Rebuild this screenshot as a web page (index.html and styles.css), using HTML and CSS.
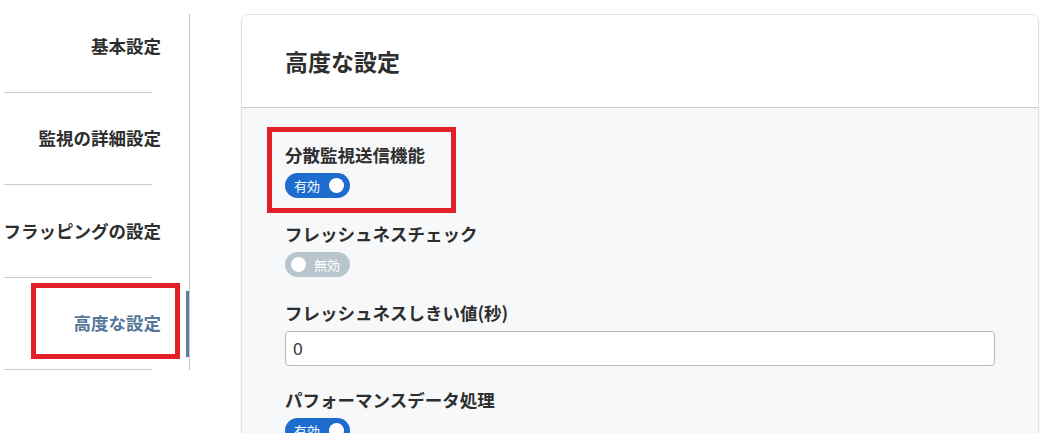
FILE: index.html
```html
<!DOCTYPE html>
<html lang="ja">
<head>
<meta charset="utf-8">
<title>高度な設定</title>
<link rel="stylesheet" href="styles.css">
</head>
<body>
<div class="page">
  <nav class="side">
    <ul class="side-list">
      <li class="side-item"><span class="side-text">基本設定</span></li>
      <li class="side-item"><span class="side-text">監視の詳細設定</span></li>
      <li class="side-item"><span class="side-text">フラッピングの設定</span></li>
      <li class="side-item active"><span class="side-text">高度な設定</span></li>
    </ul>
  </nav>
  <main class="card">
    <header class="card-head">
      <h1 class="card-title">高度な設定</h1>
    </header>
    <section class="card-body">
      <div class="field">
        <div class="label">分散監視送信機能</div>
        <span class="toggle on"><span class="toggle-text">有効</span><span class="knob"></span></span>
      </div>
      <div class="field">
        <div class="label">フレッシュネスチェック</div>
        <span class="toggle off"><span class="knob"></span><span class="toggle-text">無効</span></span>
      </div>
      <div class="field field-input">
        <div class="label">フレッシュネスしきい値(秒)</div>
        <input class="input" type="text" value="0">
      </div>
      <div class="field">
        <div class="label">パフォーマンスデータ処理</div>
        <span class="toggle on"><span class="toggle-text">有効</span><span class="knob"></span></span>
      </div>
    </section>
  </main>
  <div class="mark mark-nav"></div>
  <div class="mark mark-field"></div>
</div>
</body>
</html>
```
FILE: styles.css
```css
html, body {
  margin: 0;
  padding: 0;
  background: #ffffff;
  overflow: hidden;
}
body {
  font-family: "Noto Sans CJK JP", "Noto Sans", sans-serif;
  color: #2e2e2e;
  width: 1056px;
  height: 433px;
}
.page {
  position: relative;
  display: flex;
  align-items: flex-start;
  height: 433px;
}
.side {
  width: 189px;
  flex: none;
  margin-top: 14px;
  height: 356px;
  border-right: 1px solid #c3ccd3;
}
.side-list {
  list-style: none;
  margin: -14px 0 0 0;
  padding: 0;
}
.side-item {
  position: relative;
  height: 91.5px;
  margin: 0 37px 0 4px;
  border-bottom: 1px solid #c3ccd3;
  display: flex;
  align-items: center;
  justify-content: flex-end;
}
.side-text {
  margin-right: -9px;
  font-size: 17.5px;
  font-weight: 700;
  line-height: 24px;
  color: #2e2e2e;
  white-space: nowrap;
}
.side-item.active .side-text {
  color: #56779a;
}
.side-item.active::after {
  content: "";
  position: absolute;
  right: -37px;
  top: 13px;
  bottom: 12px;
  width: 3px;
  background: #5d7c9c;
}
.card {
  margin-top: 14px;
  margin-left: 51px;
  width: 798px;
  height: 440px;
  border: 1px solid #e1e4e8;
  border-radius: 7px;
  box-shadow: 0 1px 3px rgba(0, 0, 0, 0.07);
  overflow: hidden;
  background: #f7f8fa;
  box-sizing: border-box;
}
.card-head {
  background: #ffffff;
  height: 92px;
  border-bottom: 1px solid #c6cdd4;
  display: flex;
  align-items: center;
  padding-left: 43px;
}
.card-title {
  margin: 0;
  font-size: 23px;
  font-weight: 700;
  line-height: 30px;
  color: #2e2e2e;
}
.card-body {
  padding: 35px 43px 0 43px;
}
.field {
  margin-bottom: 24px;
}
.field-input {
  margin-bottom: 22px;
}
.label {
  font-size: 17.5px;
  font-weight: 700;
  line-height: 24px;
  margin-bottom: 6px;
  color: #2e2e2e;
  white-space: nowrap;
}
.toggle {
  display: inline-flex;
  align-items: center;
  width: 65px;
  height: 25px;
  border-radius: 13px;
  box-sizing: border-box;
  font-size: 13px;
  color: #ffffff;
  vertical-align: top;
}
.toggle.on {
  background: #1d6cce;
  padding: 0 6px 0 9px;
  justify-content: space-between;
}
.toggle.off {
  background: #b9c5cd;
  padding: 0 10px 0 6px;
  justify-content: space-between;
}
.toggle-text {
  line-height: 25px;
}
.knob {
  width: 15px;
  height: 15px;
  border-radius: 50%;
  background: #ffffff;
  flex: none;
}
.input {
  display: block;
  width: 710px;
  height: 35px;
  box-sizing: border-box;
  border: 1px solid #b4b8bc;
  border-radius: 4px;
  background: #ffffff;
  padding: 0 7px;
  font-family: "Noto Sans", "Noto Sans CJK JP", sans-serif;
  font-size: 17px;
  color: #333333;
}
.mark {
  position: absolute;
  border: 5px solid #e3202a;
  box-sizing: border-box;
}
.mark-nav {
  left: 31px;
  top: 283px;
  width: 149px;
  height: 76px;
}
.mark-field {
  left: 267px;
  top: 127px;
  width: 189px;
  height: 86px;
}
```
